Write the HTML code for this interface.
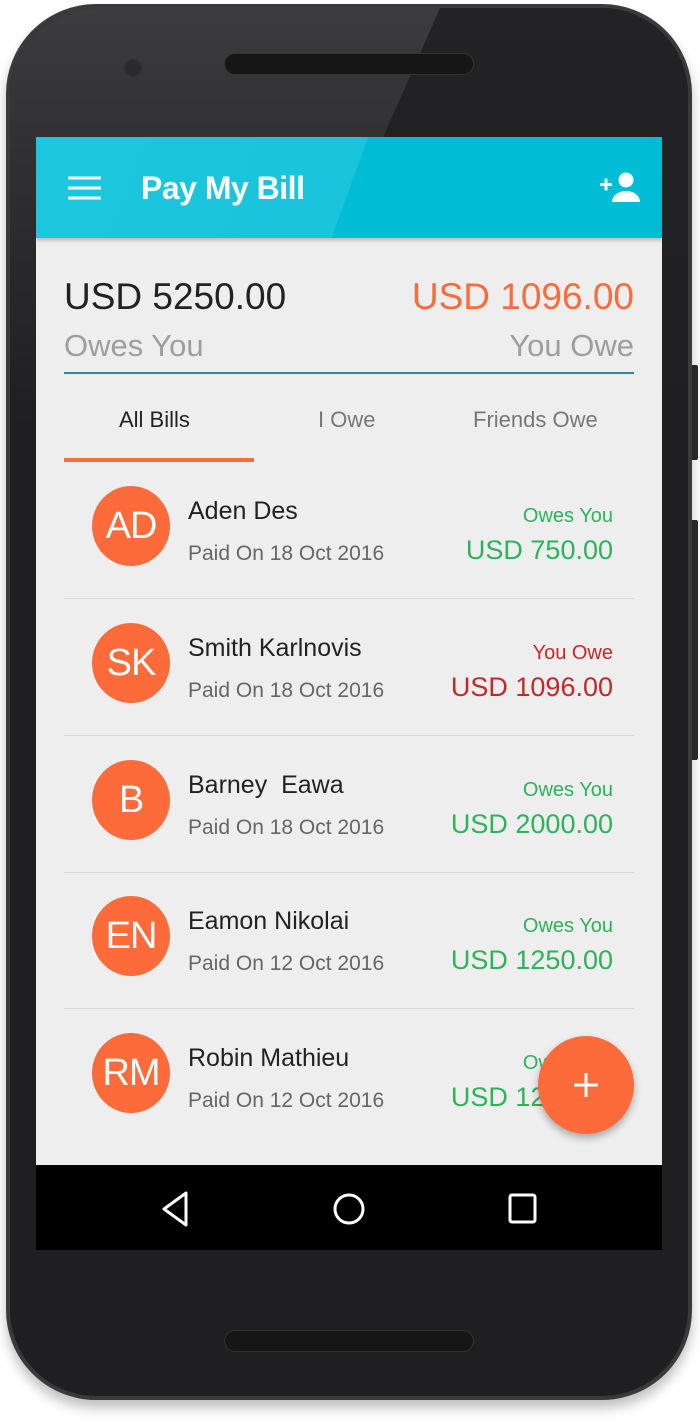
<!DOCTYPE html>
<html><head><style>
*{margin:0;padding:0;box-sizing:border-box}
body{width:700px;height:1422px;background:#fff;position:relative;overflow:hidden;font-family:"Liberation Sans",sans-serif}
.phone{position:absolute;left:6px;top:4px;width:686px;height:1396px;border-radius:90px;background:#1f1f21;border:4px solid #3a3a3c;box-shadow:0 8px 12px rgba(0,0,0,.25);overflow:hidden}
.spk{position:absolute;left:214px;width:250px;height:22px;border-radius:11px;background:#161616;border:1px solid #333}
.cam{position:absolute;left:113px;top:50px;width:20px;height:20px;border-radius:50%;background:#2a2a2c;border:2px solid #333}
.btn{position:absolute;left:690px;width:8px;background:#2a2a2a;border-radius:2px}
.screen{position:absolute;left:36px;top:137px;width:626px;height:1113px;background:#eeeeee;overflow:hidden}
.bar{position:absolute;left:0;top:0;width:626px;height:101px;background:linear-gradient(110deg,#1cc6dc 0%,#1ac4da 50%,#00bcd4 50.3%);box-shadow:0 2px 4px rgba(0,0,0,.25)}
.t{position:absolute;white-space:nowrap}
.nav{position:absolute;left:0;top:1028px;width:626px;height:85px;background:#000}
.row{position:absolute;left:28px;width:570px;height:137px;border-bottom:1px solid #d8d8d8}
.av{position:absolute;left:28px;top:24px;width:78px;height:80px;border-radius:50%;background:#fe6b3a;color:#fff;font-size:38px;text-align:center;line-height:80px;letter-spacing:-1px}
.nm{position:absolute;left:124px;top:35px;font-size:25px;color:#222}
.dt{position:absolute;left:124px;top:80px;font-size:21px;color:#666}
.lb{position:absolute;right:21px;top:43px;font-size:20px}
.am{position:absolute;right:21px;top:73px;font-size:27px}
.g{color:#2db35a}.r{color:#c62828}
</style></head><body>
<div class="btn" style="top:365px;height:95px"></div>
<div class="btn" style="top:520px;height:240px"></div>
<div class="phone">
<svg style="position:absolute;left:0;top:0" width="686" height="420"><defs><linearGradient id="s" x1="0" y1="0" x2="0" y2="1"><stop offset="0" stop-color="#3c3c3e"/><stop offset="0.35" stop-color="#303032"/><stop offset="1" stop-color="#1f1f21"/></linearGradient><linearGradient id="d" x1="0" y1="0" x2="0" y2="1"><stop offset="0" stop-color="#232325"/><stop offset="1" stop-color="#1f1f21"/></linearGradient></defs><polygon points="430,0 686,0 686,420 245,420" fill="url(#d)"/><polygon points="0,0 430,0 245,420 0,420" fill="url(#s)"/></svg>
<div class="cam"></div>
<div class="spk" style="top:45px"></div>
<div class="spk" style="top:1322px"></div>
</div>
<div class="screen">
<div class="bar">
<svg style="position:absolute;left:32px;top:38px" width="34" height="26"><g stroke="#fff" stroke-width="3"><line x1="0" y1="3" x2="33" y2="3"/><line x1="0" y1="13" x2="33" y2="13"/><line x1="0" y1="23" x2="33" y2="23"/></g></svg>
<div class="t" style="left:105px;top:33px;font-size:32px;color:#fff;font-weight:bold;letter-spacing:-0.5px">Pay My Bill</div>
<svg style="position:absolute;left:564px;top:34px" width="42" height="32" viewBox="0 0 42 32"><g fill="#fff"><rect x="0" y="12" width="12" height="3"/><rect x="4.5" y="7.5" width="3" height="12"/><circle cx="26" cy="9" r="7.5"/><path d="M12 31c0-7 7-11 14-11s14 4 14 11z"/></g></svg>
</div>
<div class="t" style="left:28px;top:139px;font-size:37px;color:#222">USD 5250.00</div>
<div class="t" style="right:28px;top:139px;font-size:37px;color:#fe6b3a">USD 1096.00</div>
<div class="t" style="left:28px;top:191px;font-size:31px;color:#9e9e9e">Owes You</div>
<div class="t" style="right:28px;top:191px;font-size:31px;color:#9e9e9e">You Owe</div>
<div style="position:absolute;left:28px;top:235px;width:570px;height:2px;background:#2a8a96"></div>
<div class="t" style="left:83px;top:270px;font-size:22px;color:#222">All Bills</div>
<div class="t" style="left:282px;top:270px;font-size:22px;color:#777">I Owe</div>
<div class="t" style="left:437px;top:270px;font-size:22px;color:#777">Friends Owe</div>
<div style="position:absolute;left:28px;top:321px;width:190px;height:4px;background:#fe6b3a"></div>

<div class="row" style="top:325px"><div class="av">AD</div><div class="nm">Aden Des</div><div class="dt">Paid On 18 Oct 2016</div><div class="lb g">Owes You</div><div class="am g">USD 750.00</div></div>
<div class="row" style="top:462px"><div class="av">SK</div><div class="nm">Smith Karlnovis</div><div class="dt">Paid On 18 Oct 2016</div><div class="lb r">You Owe</div><div class="am r">USD 1096.00</div></div>
<div class="row" style="top:599px"><div class="av">B</div><div class="nm">Barney&nbsp; Eawa</div><div class="dt">Paid On 18 Oct 2016</div><div class="lb g">Owes You</div><div class="am g">USD 2000.00</div></div>
<div class="row" style="top:735px"><div class="av">EN</div><div class="nm">Eamon Nikolai</div><div class="dt">Paid On 12 Oct 2016</div><div class="lb g">Owes You</div><div class="am g">USD 1250.00</div></div>
<div class="row" style="top:872px;border:none"><div class="av">RM</div><div class="nm">Robin Mathieu</div><div class="dt">Paid On 12 Oct 2016</div><div class="lb g">Owes You</div><div class="am g">USD 1250.00</div></div>

<div style="position:absolute;left:502px;top:899px;width:96px;height:98px;border-radius:50%;background:#fe6b3a;box-shadow:0 4px 8px rgba(0,0,0,.3)"><svg style="position:absolute;left:36px;top:37px" width="24" height="24"><g stroke="#fff" stroke-width="3"><line x1="12" y1="0" x2="12" y2="24"/><line x1="0" y1="12" x2="24" y2="12"/></g></svg></div>

<div class="nav">
<svg style="position:absolute;left:124px;top:26px" width="30" height="36"><path d="M26 2L4 18 26 34z" fill="none" stroke="#fff" stroke-width="3" stroke-linejoin="round"/></svg>
<svg style="position:absolute;left:296px;top:27px" width="34" height="34"><circle cx="17" cy="17" r="14" fill="none" stroke="#fff" stroke-width="3"/></svg>
<svg style="position:absolute;left:472px;top:28px" width="30" height="32"><rect x="2" y="2" width="25" height="27" rx="2" fill="none" stroke="#fff" stroke-width="3"/></svg>
</div>
</div>
</body></html>
